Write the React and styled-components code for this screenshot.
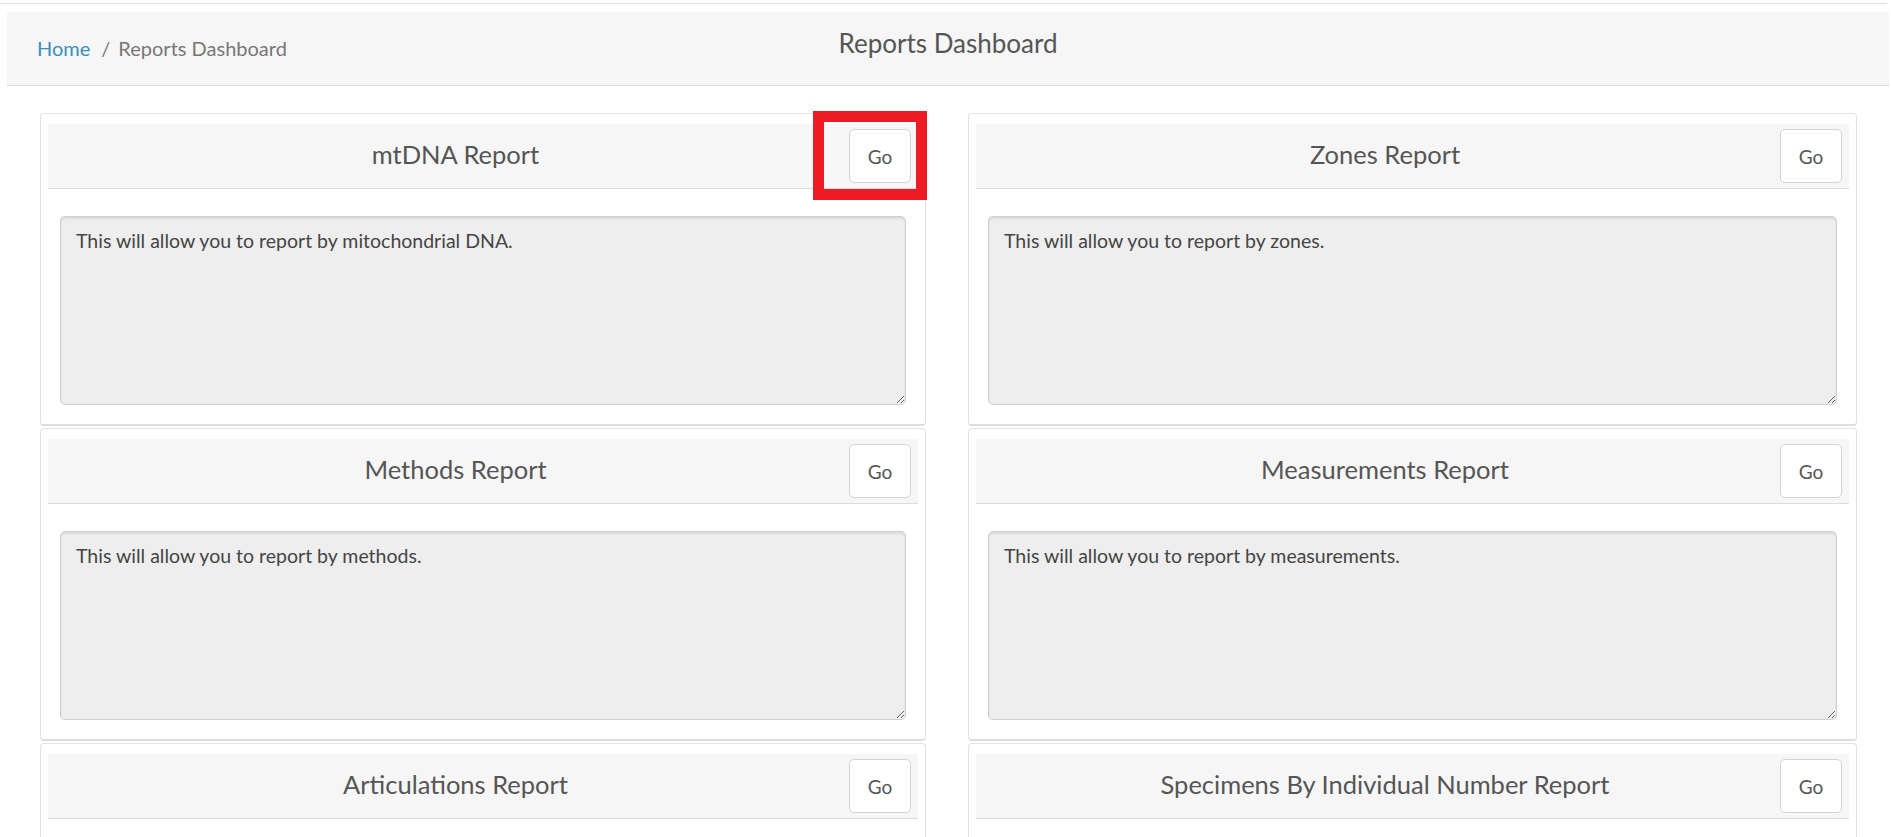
import React from 'react';
import styled, { createGlobalStyle } from 'styled-components';

const GlobalStyle = createGlobalStyle`
  html, body {
    margin: 0;
    padding: 0;
    background: #fff;
  }
  body {
    font-family: Lato, "Open Sans", "Liberation Sans", sans-serif;
    color: #555;
  }
`;

const Page = styled.div`
  width: 1891px;
  padding-top: 3px;
`;

const TopRule = styled.div`
  height: 1px;
  background: #e3e3e3;
  margin-right: 4px;
`;

const HeaderBar = styled.header`
  margin: 8px 2px 0 7px;
  height: 73px;
  background: #f6f6f6;
  border-bottom: 1px solid #dedede;
  display: grid;
  grid-template-columns: 1fr auto 1fr;
  align-items: start;
`;

const Breadcrumb = styled.nav`
  padding: 24px 0 0 30px;
  font-size: 20px;
  color: #777;
  display: flex;
`;

const Crumb = styled.a`
  color: ${({ active }) => (active ? '#777' : '#3c8dbc')};
  text-decoration: none;
`;

const Separator = styled.span`
  margin: 0 8px 0 11px;
`;

const PageTitle = styled.h1`
  margin: 0;
  padding-top: 15px;
  font-size: 26px;
  font-weight: 400;
  color: #555;
`;

const Grid = styled.main`
  display: grid;
  grid-template-columns: 886px 889px;
  column-gap: 42px;
  padding: 27px 0 0 40px;
`;

const Column = styled.div`
  display: flex;
  flex-direction: column;
  gap: 2px;
`;

const Card = styled.section`
  border: 1px solid #e2e2e2;
  border-bottom: 2px solid #ddd;
  border-radius: 4px;
  padding: 10px 7px 19px;
  background: #fff;
`;

const CardHeader = styled.div`
  display: flex;
  align-items: center;
  height: 64px;
  padding: 0 7px 0 0;
  background: #f6f6f6;
  border-bottom: 1px solid #dcdcdc;
`;

const CardTitle = styled.h2`
  flex: 1;
  margin: 0 0 4px;
  padding-left: 14px;
  text-align: center;
  font-size: 25.5px;
  font-weight: 400;
  color: #555;
`;

const ButtonSlot = styled.div`
  position: relative;
  display: flex;
`;

// red annotation frame drawn over the first Go button in the screenshot
const Highlight = styled.span`
  position: absolute;
  left: -36px;
  right: -16px;
  top: -18px;
  bottom: -17px;
  border: 11px solid #ed1c24;
  pointer-events: none;
`;

const GoButton = styled.button`
  width: 62px;
  height: 54px;
  background: #fff;
  border: 1px solid #d3d3d3;
  border-radius: 5px;
  font-family: inherit;
  font-size: 19px;
  color: #555;
  cursor: pointer;
`;

const Description = styled.textarea`
  display: block;
  box-sizing: border-box;
  width: calc(100% - 24px);
  height: 189px;
  margin: 27px 12px 0;
  padding: 12px 15px;
  background: #eee;
  border: 1px solid #cfcfcf;
  border-radius: 5px;
  box-shadow: inset 0 2px 2px rgba(0, 0, 0, 0.08);
  font-family: inherit;
  font-size: 19.5px;
  color: #454545;
  resize: vertical;
  outline: none;
`;

const reports = [
  { title: 'mtDNA Report', text: 'This will allow you to report by mitochondrial DNA.', marked: true },
  { title: 'Zones Report', text: 'This will allow you to report by zones.' },
  { title: 'Methods Report', text: 'This will allow you to report by methods.' },
  { title: 'Measurements Report', text: 'This will allow you to report by measurements.' },
  { title: 'Articulations Report', text: 'This will allow you to report by articulations.' },
  { title: 'Specimens By Individual Number Report', text: 'This will allow you to report specimens by individual number.' },
];

function ReportCard({ title, text, marked }) {
  return (
    <Card>
      <CardHeader>
        <CardTitle>{title}</CardTitle>
        <ButtonSlot>
          <GoButton type="button">Go</GoButton>
          {marked && <Highlight />}
        </ButtonSlot>
      </CardHeader>
      <Description readOnly defaultValue={text} />
    </Card>
  );
}

export default function App() {
  const left = reports.filter((_, i) => i % 2 === 0);
  const right = reports.filter((_, i) => i % 2 === 1);

  return (
    <Page>
      <GlobalStyle />
      <TopRule />
      <HeaderBar>
        <Breadcrumb>
          <Crumb href="#">Home</Crumb>
          <Separator>/</Separator>
          <Crumb active>Reports Dashboard</Crumb>
        </Breadcrumb>
        <PageTitle>Reports Dashboard</PageTitle>
        <div />
      </HeaderBar>
      <Grid>
        <Column>
          {left.map(r => <ReportCard key={r.title} {...r} />)}
        </Column>
        <Column>
          {right.map(r => <ReportCard key={r.title} {...r} />)}
        </Column>
      </Grid>
    </Page>
  );
}
